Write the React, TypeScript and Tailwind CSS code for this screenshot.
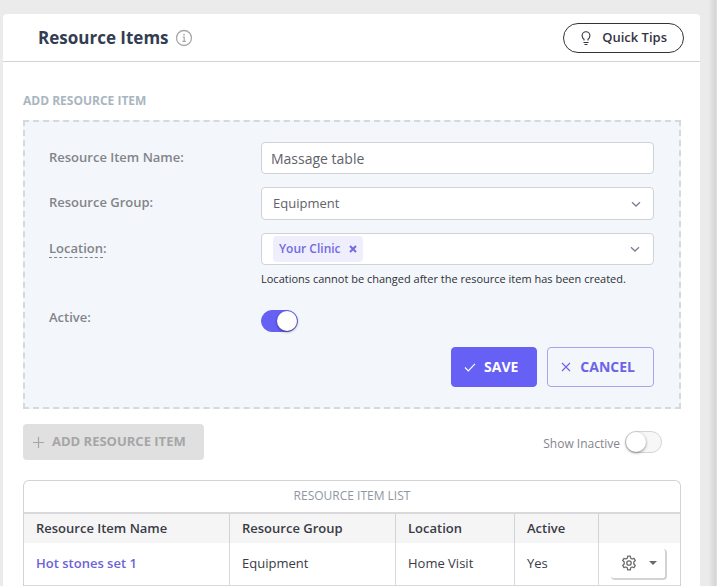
import { useState } from "react";

const items = [
  { name: "Hot stones set 1", group: "Equipment", location: "Home Visit", active: "Yes" },
];

function Chevron() {
  return (
    <svg
      className="pointer-events-none absolute right-3 top-1/2 h-3 w-3 -translate-y-1/2 text-[#7c8090]"
      viewBox="0 0 12 12"
      fill="none"
      stroke="currentColor"
      strokeWidth="1.3"
    >
      <path d="M2 4.2 6 8l4-3.8" />
    </svg>
  );
}

function Toggle({ id, checked, onChange }: { id: string; checked: boolean; onChange: (v: boolean) => void }) {
  return (
    <span className="relative block h-[22px] w-[37px]">
      <input
        id={id}
        type="checkbox"
        checked={checked}
        onChange={(e) => onChange(e.target.checked)}
        className="peer block h-[22px] w-[37px] cursor-pointer appearance-none rounded-full border border-[#d4d4d4] bg-[#f7f7f7] checked:border-[#6660f5] checked:bg-[#6660f5]"
      />
      <span className="pointer-events-none absolute left-px top-px h-5 w-5 rounded-full bg-white shadow-[0_1px_3px_rgba(0,0,0,0.45)] peer-checked:left-4" />
    </span>
  );
}

function Header() {
  return (
    <header className="flex h-12 items-center justify-between border-b border-[#d3d3d3] pl-[35px] pr-4">
      <div className="flex items-center gap-[6px]">
        <h1 className="text-[17px] font-bold text-[#333d52]">Resource Items</h1>
        <svg className="h-[18px] w-[18px] text-[#a8a8a8]" viewBox="0 0 18 18" fill="none" stroke="currentColor">
          <circle cx="9" cy="9" r="7.5" strokeWidth="1.3" />
          <path d="M7.6 8H9.2v4M7.4 12.3h3.4" strokeWidth="1.2" />
          <circle cx="9" cy="5.6" r="0.9" fill="currentColor" stroke="none" />
        </svg>
      </div>
      <button type="button" className="flex h-[30px] items-center gap-2 rounded-full border border-[#333] pl-[14px] pr-4 text-[13px] font-semibold text-[#35353f]">
        <svg className="h-4 w-4" viewBox="0 0 16 16" fill="none" stroke="currentColor">
          <path d="M6 10.5V9.2C4.8 8.3 4.1 7.2 4.1 5.7a3.900 3.900 0 0 1 7.800 0c0 1.500-.7 2.600-1.900 3.500v1.300" strokeWidth="1.1" />
          <path d="M5.500 12.500h5M6.500 14.500h3" strokeWidth="1.1" />
        </svg>
        Quick Tips
      </button>
    </header>
  );
}

function ResourceForm() {
  const [name, setName] = useState("Massage table");
  const [active, setActive] = useState(true);
  const [locations, setLocations] = useState(["Your Clinic"]);

  const labelClass = "self-start pt-[5px] text-[13px] leading-5 font-semibold text-[#838489]";
  const fieldClass = "w-full rounded border border-[#d0d2d8] bg-white text-[#5f6369]";

  return (
    <form
      onSubmit={(e) => e.preventDefault()}
      className="border-2 border-dashed border-[#d3dadd] bg-[#f3f7fb] py-5 pl-6 pr-[25px]"
    >
      <div className="grid grid-cols-[212px_1fr] gap-y-[13px]">
        <label htmlFor="item-name" className={labelClass}>Resource Item Name:</label>
        <input
          id="item-name"
          value={name}
          onChange={(e) => setName(e.target.value)}
          className={`${fieldClass} h-8 px-[9px] text-sm`}
        />

        <label htmlFor="item-group" className={labelClass}>Resource Group:</label>
        <div className="relative">
          <select id="item-group" className={`${fieldClass} block h-[33px] appearance-none px-[11px] text-[13px]`}>
            <option>Equipment</option>
          </select>
          <Chevron />
        </div>

        <label htmlFor="item-location" className={labelClass}>
          <span className="border-b border-dashed border-[#838489]">Location</span>:
        </label>
        <div>
          <div className={`${fieldClass} relative flex h-8 items-center pl-[11px] pr-8`}>
            {locations.map((loc) => (
              <span key={loc} className="flex h-[26px] shrink-0 items-center gap-2 rounded bg-[#efeefd] px-[6px] text-xs font-semibold text-[#736ae0]">
                {loc}
                <button type="button" aria-label={`Remove ${loc}`} onClick={() => setLocations([])}>
                  <svg className="h-2 w-2" viewBox="0 0 8 8" stroke="currentColor" strokeWidth="2">
                    <path d="M1 1l6 6M7 1 1 7" />
                  </svg>
                </button>
              </span>
            ))}
            <input id="item-location" className="min-w-0 flex-1 bg-transparent text-[13px] outline-none" />
            <Chevron />
          </div>
          <p className="pt-1 text-[11px] leading-5 text-[#2e3036]">
            Locations cannot be changed after the resource item has been created.
          </p>
        </div>

        <label htmlFor="item-active" className={labelClass}>Active:</label>
        <div className="pt-2">
          <Toggle id="item-active" checked={active} onChange={setActive} />
        </div>
      </div>

      <div className="mt-[15px] flex justify-end gap-[10px]">
        <button type="submit" className="flex h-10 items-center gap-2 rounded border border-[#6660f5] bg-[#6660f5] pl-3 pr-[18px] text-sm font-bold text-white">
          <svg className="h-3 w-3" viewBox="0 0 12 12" fill="none" stroke="currentColor" strokeWidth="1.2">
            <path d="M1 6.500 4.300 9.800 11 2.800" />
          </svg>
          SAVE
        </button>
        <button type="button" className="flex h-10 items-center gap-2 rounded border border-[#a9a4ee] pl-3 pr-[18px] text-sm font-bold text-[#6c63e6]">
          <svg className="h-3 w-3" viewBox="0 0 12 12" stroke="currentColor" strokeWidth="1.1">
            <path d="M2 2l8 8M10 2 2 10" />
          </svg>
          CANCEL
        </button>
      </div>
    </form>
  );
}

function ResourceTable() {
  const th = "border-r border-[#d3d3d6] px-3 text-left font-semibold last:border-r-0";
  const td = "border-r border-[#d9d9dc] px-3 last:border-r-0";

  return (
    <div className="overflow-hidden rounded-t-md border border-b-0 border-[#d3d3d6]">
      <table className="w-full table-fixed border-separate border-spacing-0 text-[13px] text-[#3a3b45]">
        <caption className="h-[33px] border-b-2 border-[#d9d9dc] text-xs leading-[30px] font-medium text-[#8f97a1]">
          RESOURCE ITEM LIST
        </caption>
        <colgroup>
          <col />
          <col className="w-[166px]" />
          <col className="w-[119px]" />
          <col className="w-[84px]" />
          <col className="w-[81px]" />
        </colgroup>
        <thead>
          <tr className="h-[29px] bg-[#f5f5f6]">
            <th className={th}>Resource Item Name</th>
            <th className={th}>Resource Group</th>
            <th className={th}>Location</th>
            <th className={th}>Active</th>
            <th className={th} aria-label="Actions" />
          </tr>
        </thead>
        <tbody>
          {items.map((item) => (
            <tr key={item.name} className="h-[43px] *:border-b">
              <td className={td}>
                <a href="#" className="font-semibold text-[#6c63d8]">{item.name}</a>
              </td>
              <td className={td}>{item.group}</td>
              <td className={td}>{item.location}</td>
              <td className={td}>{item.active}</td>
              <td className={td}>
                <button
                  type="button"
                  aria-label="Item actions"
                  className="flex h-[31px] w-[56px] items-center justify-between rounded-sm border-b-2 border-r-2 border-[#d3d3d3] pl-[10px] pr-2 text-[#6a6a6a]"
                >
                  <svg className="h-4 w-4" viewBox="0 0 16 16" fill="none" stroke="currentColor" strokeWidth="1.3" strokeLinejoin="round">
                    <path d="M6.700 1.200h2.600l.4 2 1.400.8 1.900-.7 1.300 2.300-1.500 1.300v2.200l1.500 1.300-1.300 2.300-1.900-.7-1.400.8-.4 2H6.700l-.4-2-1.400-.8-1.900.7-1.300-2.300 1.500-1.300V6.900L1.700 5.600 3 3.300l1.900.7 1.400-.8z" />
                    <circle cx="8" cy="8" r="2.200" />
                  </svg>
                  <svg className="h-1 w-2" viewBox="0 0 8 4" fill="currentColor">
                    <path d="M0 0h8L4 4z" />
                  </svg>
                </button>
              </td>
            </tr>
          ))}
        </tbody>
      </table>
    </div>
  );
}

export default function App() {
  const [showInactive, setShowInactive] = useState(false);

  return (
    <div className="flex min-h-screen bg-[#ebebeb] pl-[3px] pt-[14px] font-['Open_Sans',sans-serif]">
      <main className="min-w-0 flex-1 rounded-t bg-white">
        <Header />
        <div className="pl-5 pr-[19px] pt-[29px]">
          <h2 className="mb-[9px] text-xs leading-5 font-bold text-[#a9b6c0]">ADD RESOURCE ITEM</h2>
          <ResourceForm />
          <div className="mb-5 mt-[15px] flex items-center justify-between pr-[19px]">
            <button type="button" disabled className="flex h-9 items-center gap-2 rounded bg-[#e0e0e0] pl-[10px] pr-[18px] text-[13px] font-bold text-[#a6a6a6]">
              <svg className="h-[11px] w-[11px]" viewBox="0 0 11 11" stroke="currentColor" strokeWidth="1.2">
                <path d="M5.500 0v11M0 5.500h11" />
              </svg>
              ADD RESOURCE ITEM
            </button>
            <div className="flex items-end gap-[5px]">
              <label htmlFor="show-inactive" className="text-xs leading-[18px] text-[#85868b]">Show Inactive</label>
              <Toggle id="show-inactive" checked={showInactive} onChange={setShowInactive} />
            </div>
          </div>
          <ResourceTable />
        </div>
      </main>
      <div className="-mt-[14px] w-[17px] bg-linear-to-r from-[#ebebeb] from-50% via-[#d6d6d6] via-90% to-[#e2e2e2]" />
    </div>
  );
}
